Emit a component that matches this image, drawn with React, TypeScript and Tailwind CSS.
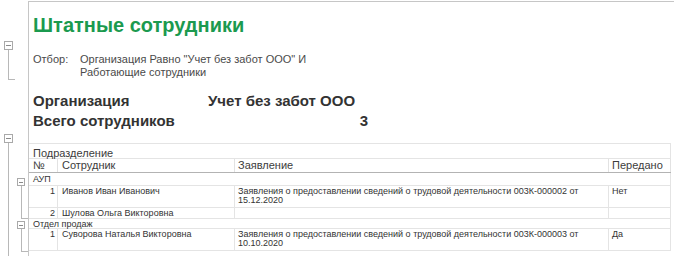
import React from 'react';

type Row = {
  n: number;
  name: string;
  doc: string[];
  sent: string;
};

type Group = {
  title: string;
  rows: Row[];
};

const GROUPS: Group[] = [
  {
    title: 'АУП',
    rows: [
      {
        n: 1,
        name: 'Иванов Иван Иванович',
        doc: ['Заявления о предоставлении сведений о трудовой деятельности 003К-000002 от', '15.12.2020'],
        sent: 'Нет',
      },
      { n: 2, name: 'Шулова Ольга Викторовна', doc: [], sent: '' },
    ],
  },
  {
    title: 'Отдел продаж',
    rows: [
      {
        n: 1,
        name: 'Суворова Наталья Викторовна',
        doc: ['Заявления о предоставлении сведений о трудовой деятельности 003К-000003 от', '10.10.2020'],
        sent: 'Да',
      },
    ],
  },
];

// Collapse marker of the outline gutter: a boxed minus with a bracket running down
const Bracket: React.FC<{ height: number; box: number; foot: number; stretch?: boolean }> = ({ height, box, foot, stretch }) => (
  <div className={`flex flex-col ${stretch ? 'flex-1' : ''}`} style={stretch ? undefined : { height }}>
    <div
      className="flex items-center justify-center border border-[#a9a9a9] bg-white shrink-0"
      style={{ width: box, height: box }}
    >
      <div className="h-px bg-[#8a8a8a]" style={{ width: box - 4 }} />
    </div>
    <div
      className={`flex-1 border-l border-[#b8b8b8] ${stretch ? '' : 'border-b'}`}
      style={{ marginLeft: Math.floor(box / 2), width: foot }}
    />
  </div>
);

const App: React.FC = () => {
  return (
    <div className="w-[674px] h-[256px] overflow-hidden bg-white flex font-['Liberation_Sans',Arial,sans-serif]">
      {/* Outline gutter */}
      <div className="w-[28px] shrink-0 flex">
        <div className="w-[15px] flex flex-col pl-[4px]">
          <div className="h-[41px] shrink-0" />
          <Bracket height={39} box={9} foot={7} />
          <div className="h-[54px] shrink-0" />
          <Bracket height={0} box={9} foot={7} stretch />
        </div>
        <div className="w-[13px] flex flex-col pl-[2px]">
          <div className="h-[178px] shrink-0" />
          <Bracket height={41} box={8} foot={7} />
          <div className="h-[2px] shrink-0" />
          <Bracket height={31} box={8} foot={7} />
        </div>
      </div>

      {/* Report sheet */}
      <div className="flex-1 border-l border-t border-[#c6c6c6] mt-[1px] pl-[4px]">
        <h1 className="pt-[11px] h-[35px] text-[20px] leading-[24px] font-bold text-[#1b9a4f]">
          Штатные сотрудники
        </h1>

        <div className="mt-[16px] flex text-[11px] leading-[13px] text-[#4a4a4a]">
          <span className="w-[47px] shrink-0">Отбор:</span>
          <span className="w-[240px]">
            Организация Равно "Учет без забот ООО" И
            <br />
            Работающие сотрудники
          </span>
        </div>

        <div className="mt-[12px] grid grid-cols-[175px_160px] text-[15px] leading-[20px] font-bold text-[#333333]">
          <span>Организация</span>
          <span>Учет без забот ООО</span>
          <span>Всего сотрудников</span>
          <span className="text-right">3</span>
        </div>

        {/* Employees table */}
        <div className="mt-[12px] -ml-[4px] w-[642px] text-[#3c3c3c]">
          <div className="border-t border-b border-r border-[#e4e4e4] pt-[3px] h-[16px] leading-[12px] text-[11px] pl-[4px]">
            Подразделение
          </div>
          <div className="flex h-[14px] border-b border-[#b3b3b3] text-[11px] leading-[13px]">
            <div className="w-[29px] border-r border-[#e2e2e2] pl-[4px]">№</div>
            <div className="w-[177px] border-r border-[#e2e2e2] pl-[4px]">Сотрудник</div>
            <div className="w-[374px] border-r border-[#e2e2e2] pl-[3px]">Заявление</div>
            <div className="flex-1 border-r border-[#e2e2e2] pl-[3px]">Передано</div>
          </div>

          {GROUPS.map((g, gi) => (
            <div key={g.title} className="text-[9px] text-[#333333]">
              <div
                className={`border-b border-r border-[#e4e4e4] pl-[4px] leading-[9px] ${gi === 0 ? 'h-[13px] pt-[2px]' : 'h-[10px] pt-[1px]'}`}
              >
                {g.title}
              </div>
              {g.rows.map((r) => (
                <div
                  key={r.name}
                  className={`flex border-b border-[#e4e4e4] leading-[9px] ${r.doc.length ? 'h-[22px]' : 'h-[11px]'}`}
                >
                  <div className="w-[29px] border-r border-[#e4e4e4] pr-[2px] pt-[1px] text-right">{r.n}</div>
                  <div className="w-[177px] border-r border-[#e4e4e4] pl-[4px] pt-[1px]">{r.name}</div>
                  <div className="w-[374px] border-r border-[#e4e4e4] pl-[3px] pt-[1px]">
                    {r.doc.map((line) => (
                      <div key={line}>{line}</div>
                    ))}
                  </div>
                  <div className="flex-1 border-r border-[#e4e4e4] pl-[3px] pt-[1px]">{r.sent}</div>
                </div>
              ))}
            </div>
          ))}
        </div>
      </div>
    </div>
  );
};

export default App;
